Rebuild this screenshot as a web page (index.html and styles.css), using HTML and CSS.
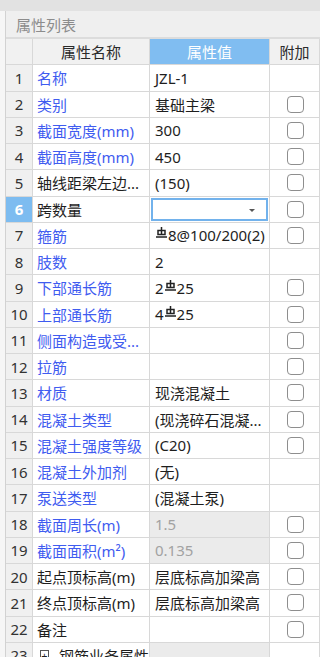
FILE: index.html
```html
<!DOCTYPE html>
<html lang="zh-CN">
<head>
    <meta charset="UTF-8">
    <meta name="viewport" content="width=device-width, initial-scale=1.0">
    <title>属性列表</title>
    <link rel="stylesheet" href="styles.css">
</head>
<body>
    <div class="topbar"></div>

    <section class="panel">
        <header class="title">属性列表</header>

        <div class="grid">
            <div class="row head">
                <div class="num"></div>
                <div class="name">属性名称</div>
                <div class="value active">属性值</div>
                <div class="extra">附加</div>
            </div>

            <div class="row">
                <div class="num">1</div>
                <div class="name blue">名称</div>
                <div class="value">JZL-1</div>
                <div class="extra"></div>
            </div>
            <div class="row">
                <div class="num">2</div>
                <div class="name blue">类别</div>
                <div class="value">基础主梁</div>
                <div class="extra"><span class="check"></span></div>
            </div>
            <div class="row">
                <div class="num">3</div>
                <div class="name blue">截面宽度(mm)</div>
                <div class="value">300</div>
                <div class="extra"><span class="check"></span></div>
            </div>
            <div class="row">
                <div class="num">4</div>
                <div class="name blue">截面高度(mm)</div>
                <div class="value">450</div>
                <div class="extra"><span class="check"></span></div>
            </div>
            <div class="row">
                <div class="num">5</div>
                <div class="name">轴线距梁左边...</div>
                <div class="value">(150)</div>
                <div class="extra"><span class="check"></span></div>
            </div>
            <div class="row">
                <div class="num selected">6</div>
                <div class="name">跨数量</div>
                <div class="value">
                    <div class="select"><span class="caret"></span></div>
                </div>
                <div class="extra"><span class="check"></span></div>
            </div>
            <div class="row">
                <div class="num">7</div>
                <div class="name blue">箍筋</div>
                <div class="value"><svg class="bar" viewBox="0 0 11 11"><path d="M5.5 0v8M2 3.5h7v4h-7zM0 10h11"/></svg>8@100/200(2)</div>
                <div class="extra"><span class="check"></span></div>
            </div>
            <div class="row">
                <div class="num">8</div>
                <div class="name blue">肢数</div>
                <div class="value">2</div>
                <div class="extra"></div>
            </div>
            <div class="row">
                <div class="num">9</div>
                <div class="name blue">下部通长筋</div>
                <div class="value">2<svg class="bar" viewBox="0 0 11 11"><path d="M5.5 0v8M2 3.5h7v4h-7zM0 10h11"/></svg>25</div>
                <div class="extra"><span class="check"></span></div>
            </div>
            <div class="row">
                <div class="num">10</div>
                <div class="name blue">上部通长筋</div>
                <div class="value">4<svg class="bar" viewBox="0 0 11 11"><path d="M5.5 0v8M2 3.5h7v4h-7zM0 10h11"/></svg>25</div>
                <div class="extra"><span class="check"></span></div>
            </div>
            <div class="row">
                <div class="num">11</div>
                <div class="name blue">侧面构造或受...</div>
                <div class="value"></div>
                <div class="extra"><span class="check"></span></div>
            </div>
            <div class="row">
                <div class="num">12</div>
                <div class="name blue">拉筋</div>
                <div class="value"></div>
                <div class="extra"><span class="check"></span></div>
            </div>
            <div class="row">
                <div class="num">13</div>
                <div class="name blue">材质</div>
                <div class="value">现浇混凝土</div>
                <div class="extra"><span class="check"></span></div>
            </div>
            <div class="row">
                <div class="num">14</div>
                <div class="name blue">混凝土类型</div>
                <div class="value">(现浇碎石混凝...</div>
                <div class="extra"><span class="check"></span></div>
            </div>
            <div class="row">
                <div class="num">15</div>
                <div class="name blue">混凝土强度等级</div>
                <div class="value">(C20)</div>
                <div class="extra"><span class="check"></span></div>
            </div>
            <div class="row">
                <div class="num">16</div>
                <div class="name blue">混凝土外加剂</div>
                <div class="value">(无)</div>
                <div class="extra"></div>
            </div>
            <div class="row">
                <div class="num">17</div>
                <div class="name blue">泵送类型</div>
                <div class="value">(混凝土泵)</div>
                <div class="extra"></div>
            </div>
            <div class="row">
                <div class="num">18</div>
                <div class="name blue">截面周长(m)</div>
                <div class="value readonly">1.5</div>
                <div class="extra"><span class="check"></span></div>
            </div>
            <div class="row">
                <div class="num">19</div>
                <div class="name blue">截面面积(m²)</div>
                <div class="value readonly">0.135</div>
                <div class="extra"><span class="check"></span></div>
            </div>
            <div class="row">
                <div class="num">20</div>
                <div class="name">起点顶标高(m)</div>
                <div class="value">层底标高加梁高</div>
                <div class="extra"><span class="check"></span></div>
            </div>
            <div class="row">
                <div class="num">21</div>
                <div class="name">终点顶标高(m)</div>
                <div class="value">层底标高加梁高</div>
                <div class="extra"><span class="check"></span></div>
            </div>
            <div class="row">
                <div class="num">22</div>
                <div class="name">备注</div>
                <div class="value"></div>
                <div class="extra"><span class="check"></span></div>
            </div>
            <div class="row">
                <div class="num">23</div>
                <div class="name"><span class="expand">+</span>钢筋业务属性</div>
                <div class="value readonly"></div>
                <div class="extra"></div>
            </div>
        </div>
    </section>
</body>
</html>
```

FILE: styles.css
```css
html, body {
    margin: 0;
    height: 100%;
    overflow: hidden;
}

body {
    font-family: "Noto Sans", "Noto Sans CJK SC", sans-serif;
    font-size: 15px;
    color: #1e1e1e;
    background: #f6f6f6;
}

.topbar {
    height: 11px;
    background: #e2e2e2;
}

.panel {
    margin-left: 5px;
    border-left: 1px solid #d2d2d2;
    background: #fff;
}

.title {
    height: 26px;
    display: flex;
    align-items: center;
    padding-left: 10px;
    background: #efefef;
    border-bottom: 2px solid #dcdcdc;
    color: #8c8c8c;
}

.row {
    display: grid;
    grid-template-columns: 27px 117px 120px 1fr;
    height: 26.26px;

    > div {
        display: flex;
        align-items: center;
        box-sizing: border-box;
        border-right: 1px solid #d8d8d8;
        border-bottom: 1px solid #d8d8d8;
        white-space: nowrap;
        overflow: hidden;
    }
}

.num {
    justify-content: center;
    background: #f0f0f0;
    color: #333;

    &.selected {
        background: #7dbcf0;
        color: #fff;
        font-weight: 700;
    }
}

.name {
    padding-left: 4px;

    &.blue {
        color: #3f5cf0;
    }
}

.value {
    padding-left: 5px;

    &.readonly {
        background: #ebebeb;
        color: #a2a2a2;
    }
}

.extra {
    justify-content: center;
    padding-left: 2px;
}

.head > div {
    justify-content: center;
    padding: 0;
    background: #f1f1f1;
    color: #2a2a2a;

    &.active {
        background: #80bdf1;
        color: #fff;
    }
}

.check {
    width: 17px;
    height: 17px;
    box-sizing: border-box;
    border: 1.5px solid #8e8e8e;
    border-radius: 4px;
    background: #fff;
}

.select {
    position: relative;
    flex: 1;
    align-self: stretch;
    margin: 1px 1px 1px -4px;
    border: 2px solid #72b2ec;
}

.caret {
    position: absolute;
    right: 11px;
    top: 9px;
    border-left: 3px solid transparent;
    border-right: 3px solid transparent;
    border-top: 3px solid #555;
}

.bar {
    width: 11px;
    height: 11px;
    margin: 0 1px 5px 1px;
    fill: none;
    stroke: #222;
    stroke-width: 1.5;
}

.expand {
    width: 11px;
    height: 11px;
    box-sizing: border-box;
    border: 1px solid #555;
    display: flex;
    align-items: center;
    justify-content: center;
    font-size: 11px;
    line-height: 1;
    margin: 0 10px 0 3px;
}
```
